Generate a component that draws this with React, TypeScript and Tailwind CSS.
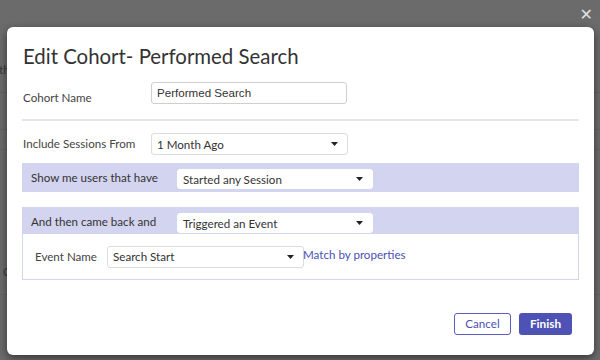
import React from "react";

const Caret = () => (
  <svg width="7" height="4" viewBox="0 0 7 4" className="shrink-0">
    <path d="M0 0 L7 0 L3.5 4 Z" fill="#222" />
  </svg>
);

const Select = ({ text, w, h, cls = "" }: { text: string; w: string; h: string; cls?: string }) => (
  <div
    className={`flex items-center justify-between bg-white border border-[#dcdcdc] rounded-[3px] pl-[5px] pr-[9px] text-[11.6px] text-[#333] ${w} ${h} ${cls}`}
  >
    <span className="pt-[1px]">{text}</span>
    <Caret />
  </div>
);

export default function App() {
  return (
    <div
      className="relative w-[600px] h-[360px] overflow-hidden bg-[#6b6b6b]"
      style={{ fontFamily: "Lato, 'Open Sans', sans-serif" }}
    >
      {/* underlying page, dimmed */}
      <div className="flex flex-col text-[#3a3a3a] text-[12px]">
        <div className="h-[48px]" />
        <div className="h-[45px] flex items-center border-b border-[#606060]">
          <span className="-ml-[1px]">th</span>
        </div>
        <div className="h-[37px] border-b border-[#626262]" />
        <div className="h-[20px] border-b border-[#646464]" />
        <div className="h-[100px]" />
        <div className="h-[45px] flex items-center border-b border-[#646464]">
          <span className="ml-[3px]">C</span>
        </div>
      </div>

      <div
        className="absolute right-[7px] top-[7px] text-[#e0e0e0] text-[16px] leading-none"
        style={{ fontFamily: "'DejaVu Sans', sans-serif" }}
      >
        ✕
      </div>

      {/* modal */}
      <div className="absolute left-[7px] top-[27px] w-[587px] h-[328px] bg-white rounded-[6px] shadow-[0_3px_9px_rgba(0,0,0,0.5)] px-[15px] pt-[15px] flex flex-col">
        <h1 className="text-[20.4px] leading-[28px] text-[#333] pl-[1px]">Edit Cohort- Performed Search</h1>

        <div className="mt-[12px] flex items-start h-[22px]">
          <div className="w-[129px] pl-[1px] pt-[9px] text-[11.6px] leading-[13px] text-[#444]">Cohort Name</div>
          <div
            className="w-[196px] h-[22px] border border-[#cfcfcf] rounded-[3px] flex items-center pl-[5px] text-[11.6px] text-[#333]"
            style={{ fontFamily: "'Liberation Sans', Arial, sans-serif" }}
          >
            Performed Search
          </div>
        </div>

        <div className="mt-[15px] h-[2px] bg-[#e6e6e6]" />

        <div className="mt-[12px] flex items-center h-[22px]">
          <div className="w-[129px] pl-[1px] text-[11.6px] text-[#444]">Include Sessions From</div>
          <Select text="1 Month Ago" w="w-[197px]" h="h-[22px]" />
        </div>

        <div className="mt-[8px] h-[29px] bg-[#d3d4ef] flex items-start pl-[9px]">
          <div className="w-[146px] pt-[8px] text-[11.6px] leading-[13px] text-[#333]">Show me users that have</div>
          <Select text="Started any Session" w="w-[196px]" h="h-[20px]" cls="mt-[6px] border-white" />
        </div>

        <div className="mt-[15px] h-[27px] bg-[#d3d4ef] flex items-start pl-[9px]">
          <div className="w-[146px] pt-[8px] text-[11.6px] leading-[13px] text-[#333]">And then came back and</div>
          <Select text="Triggered an Event" w="w-[196px]" h="h-[20px]" cls="mt-[6px] border-white" />
        </div>
        <div className="h-[46px] border border-t-0 border-[#d3d4ef] flex items-center pl-[12px]">
          <div className="w-[72px] text-[11.6px] text-[#444]">Event Name</div>
          <Select text="Search Start" w="w-[197px]" h="h-[22px]" cls="border-[#dcdcdc]" />
          <span className="text-[11.6px] text-[#4b50b5] -ml-[1px] -mt-[3px]">Match by properties</span>
        </div>

        <div className="mt-[33px] flex justify-end gap-[8px] pr-[7px]">
          <button className="w-[57px] h-[22px] border border-[#5a5dbb] rounded-[3px] text-[11.6px] text-[#4b50b5] bg-white">
            Cancel
          </button>
          <button className="w-[53px] h-[22px] rounded-[3px] bg-[#4f52b5] text-white text-[11.8px] font-bold">
            Finish
          </button>
        </div>
      </div>
    </div>
  );
}
